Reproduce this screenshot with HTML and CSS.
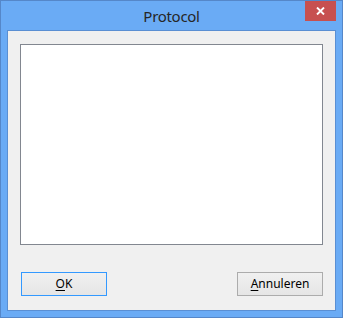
FILE: index.html
```html
<!DOCTYPE html>
<html lang="nl">
<head>
<meta charset="utf-8">
<title>Protocol</title>
<link rel="stylesheet" href="styles.css">
</head>
<body>
<div class="window">
  <div class="titlebar">
    <span class="spacer"></span>
    <div class="title">Protocol</div>
    <div class="close" aria-label="Sluiten">
      <svg width="9" height="8" viewBox="0 0 9 8" aria-hidden="true">
        <path d="M1 0.5 L8 7.5 M8 0.5 L1 7.5" stroke="#ffffff" stroke-width="1.9" fill="none"/>
      </svg>
    </div>
  </div>
  <div class="client">
    <div class="listbox"></div>
    <div class="buttons">
      <button class="btn btn-default"><u>O</u>K</button>
      <button class="btn"><u>A</u>nnuleren</button>
    </div>
  </div>
</div>
</body>
</html>
```

FILE: styles.css
```css
html, body {
  margin: 0;
  padding: 0;
}

body {
  width: 343px;
  height: 318px;
  overflow: hidden;
  background: #6aabf5;
}

.window {
  box-sizing: border-box;
  width: 343px;
  height: 318px;
  border: 1px solid #5587c9;
  background: #6aabf5;
  padding: 0 6px 6px;
  display: flex;
  flex-direction: column;
}

.titlebar {
  height: 29px;
  flex: none;
  display: grid;
  grid-template-columns: 1fr auto 1fr;
}

.title {
  align-self: start;
  margin-top: 5px;
  font-family: "Noto Sans", "Open Sans", sans-serif;
  font-size: 15px;
  letter-spacing: -0.3px;
  line-height: 20px;
  color: #262626;
}

.close {
  justify-self: end;
  align-self: start;
  width: 31px;
  height: 20px;
  background: #c75050;
  display: flex;
  align-items: center;
  justify-content: center;
}

.close svg {
  display: block;
}

.client {
  flex: 1;
  border: 1px solid #5a8fd3;
  background: #f0f0f0;
  padding: 13px 12px 14px;
  display: flex;
  flex-direction: column;
}

.listbox {
  box-sizing: border-box;
  height: 201px;
  border: 1px solid #828790;
  background: #ffffff;
}

.buttons {
  margin-top: 27px;
  padding-left: 1px;
  display: flex;
  justify-content: space-between;
}

.btn {
  box-sizing: border-box;
  width: 86px;
  height: 24px;
  padding: 0;
  margin: 0;
  border: 1px solid #acacac;
  border-radius: 0;
  background: linear-gradient(#f0f0f0, #e5e5e5);
  font-family: "Noto Sans", "Open Sans", sans-serif;
  font-size: 12px;
  line-height: 16px;
  color: #000000;
}

.btn u {
  text-underline-offset: 2px;
}

.btn-default {
  border-color: #3399ff;
}
```
